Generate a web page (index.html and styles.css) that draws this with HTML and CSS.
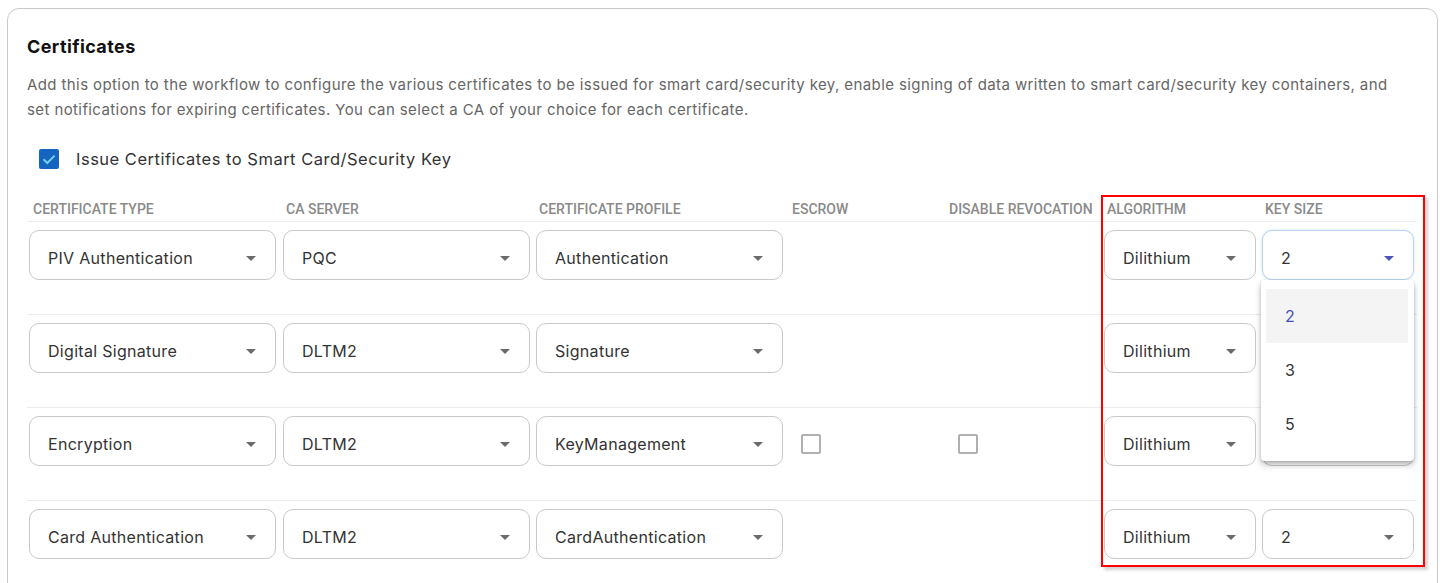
FILE: index.html
```html
<!DOCTYPE html>
<html>
<head>
<meta charset="utf-8">
<link rel="stylesheet" href="styles.css">
</head>
<body>
<div class="card">
  <h2 class="title">Certificates</h2>
  <p class="desc">Add this option to the workflow to configure the various certificates to be issued for smart card/security key, enable signing of data written to smart card/security key containers, and set notifications for expiring certificates. You can select a CA of your choice for each certificate.</p>
  <label class="issue">
    <span class="cb checked"><svg viewBox="0 0 20 20" width="20" height="20"><path d="M4.5 10.2 L8.3 14 L15.6 6.6" fill="none" stroke="#6fd0f0" stroke-width="2"/></svg></span>
    <span>Issue Certificates to Smart Card/Security Key</span>
  </label>

  <div class="table">
    <div class="row head">
      <div class="th">Certificate Type</div>
      <div class="th">CA Server</div>
      <div class="th">Certificate Profile</div>
      <div class="th">Escrow</div>
      <div class="th">Disable Revocation</div>
      <div class="th">Algorithm</div>
      <div class="th">Key Size</div>
    </div>

    <div class="row">
      <div class="td"><div class="select"><span>PIV Authentication</span><i class="arrow"></i></div></div>
      <div class="td"><div class="select"><span>PQC</span><i class="arrow"></i></div></div>
      <div class="td"><div class="select"><span>Authentication</span><i class="arrow"></i></div></div>
      <div class="td"></div>
      <div class="td"></div>
      <div class="td"><div class="select"><span>Dilithium</span><i class="arrow"></i></div></div>
      <div class="td menu-host">
        <div class="select focus"><span>2</span><i class="arrow"></i></div>
        <div class="menu">
          <div class="item active">2</div>
          <div class="item">3</div>
          <div class="item">5</div>
        </div>
      </div>
    </div>

    <div class="row">
      <div class="td"><div class="select"><span>Digital Signature</span><i class="arrow"></i></div></div>
      <div class="td"><div class="select"><span>DLTM2</span><i class="arrow"></i></div></div>
      <div class="td"><div class="select"><span>Signature</span><i class="arrow"></i></div></div>
      <div class="td"></div>
      <div class="td"></div>
      <div class="td"><div class="select"><span>Dilithium</span><i class="arrow"></i></div></div>
      <div class="td"><div class="select"><span>2</span><i class="arrow"></i></div></div>
    </div>

    <div class="row">
      <div class="td"><div class="select"><span>Encryption</span><i class="arrow"></i></div></div>
      <div class="td"><div class="select"><span>DLTM2</span><i class="arrow"></i></div></div>
      <div class="td"><div class="select"><span>KeyManagement</span><i class="arrow"></i></div></div>
      <div class="td"><span class="cb box"></span></div>
      <div class="td"><span class="cb box"></span></div>
      <div class="td"><div class="select"><span>Dilithium</span><i class="arrow"></i></div></div>
      <div class="td"><div class="select"><span>2</span><i class="arrow"></i></div></div>
    </div>

    <div class="row">
      <div class="td"><div class="select"><span>Card Authentication</span><i class="arrow"></i></div></div>
      <div class="td"><div class="select"><span>DLTM2</span><i class="arrow"></i></div></div>
      <div class="td"><div class="select"><span>CardAuthentication</span><i class="arrow"></i></div></div>
      <div class="td"></div>
      <div class="td"></div>
      <div class="td"><div class="select"><span>Dilithium</span><i class="arrow"></i></div></div>
      <div class="td"><div class="select"><span>2</span><i class="arrow"></i></div></div>
    </div>

    <div class="highlight"></div>
  </div>
</div>
</body>
</html>
```

FILE: styles.css
```css
* { box-sizing: border-box; }
html, body { margin: 0; padding: 0; background: #fff; overflow: hidden; }
body {
  font-family: Inter, "Noto Sans", "Liberation Sans", sans-serif;
  color: #333;
  width: 1445px;
  height: 583px;
}
.card {
  margin: 8px 0 0 7px;
  width: 1431px;
  height: 700px;
  border: 1px solid #c8c8c8;
  border-radius: 12px;
  padding: 27px 19px 0 19px;
}
.title {
  margin: 0;
  font-size: 18px;
  line-height: 22px;
  font-weight: 700;
  letter-spacing: 0.4px;
  color: #111;
}
.desc {
  margin: 14px 0 0 0;
  font-size: 15px;
  line-height: 25px;
  letter-spacing: 0.4px;
  color: #666;
  max-width: 1378px;
}
.issue {
  display: flex;
  align-items: center;
  height: 40px;
  margin-top: 17px;
  padding-left: 12px;
  font-size: 16.5px;
  letter-spacing: 0.5px;
  color: #333;
  gap: 17px;
}
.cb {
  display: inline-block;
  width: 20px;
  height: 20px;
  border-radius: 2px;
  flex: none;
}
.cb.checked { background: #1565c0; }
.cb.checked svg { display: block; }
.cb.box { border: 2px solid #b0b0b0; margin: 18px 0 0 12px; }

.table {
  position: relative;
  margin-top: 18px;
  width: 1390px;
}
.row {
  display: grid;
  grid-template-columns: 253px 253px 253px 157px 158px 158px 158px;
  border-top: 1px solid #ececec;
  padding: 8px 0 34px 0;
}
.row.head {
  border-top: none;
  padding: 0 0 4px 0;
  height: 24px;
  align-items: end;
}
.th {
  padding-left: 6px;
  font-family: Roboto, "Liberation Sans", sans-serif;
  font-size: 14px;
  line-height: 16px;
  font-weight: 500;
  color: #8a8a8a;
  text-transform: uppercase;
  white-space: nowrap;
}
.td { padding: 0 4px 0 2px; position: relative; }
.select {
  height: 50px;
  border: 1px solid #c9c9c9;
  border-radius: 10px;
  display: flex;
  align-items: center;
  justify-content: space-between;
  padding: 6px 19px 0 18px;
  font-size: 16px;
  letter-spacing: 0.3px;
  color: #333;
  background: #fff;
}
.td:nth-child(n+2) { padding: 0 3px 0 3px; }
.select.focus {
  border-color: #b9d3f2;
  box-shadow: 0 0 3px rgba(120, 170, 230, 0.35);
}
.arrow {
  width: 0;
  height: 0;
  border-left: 5px solid transparent;
  border-right: 5px solid transparent;
  border-top: 5px solid #6b6b6b;
}
.select.focus .arrow { border-top-color: #4a56b8; }

.menu {
  position: absolute;
  top: 50px;
  left: 2px;
  width: 153px;
  height: 181px;
  background: #fff;
  border-radius: 4px;
  box-shadow: 0 4px 6px rgba(0,0,0,0.25), 0 1px 3px rgba(0,0,0,0.15);
  padding: 9px 6px 0 5px;
  z-index: 3;
}
.item {
  height: 54px;
  display: flex;
  align-items: center;
  padding-left: 19px;
  font-size: 16px;
  color: #333;
}
.item.active { background: #f4f4f4; color: #3f51b5; }

.highlight {
  position: absolute;
  left: 1074px;
  top: -2px;
  width: 324px;
  height: 372px;
  border: 2px solid #ff0000;
  box-shadow: 3px 3px 3px rgba(0,0,0,0.18);
  z-index: 4;
  pointer-events: none;
}
```
